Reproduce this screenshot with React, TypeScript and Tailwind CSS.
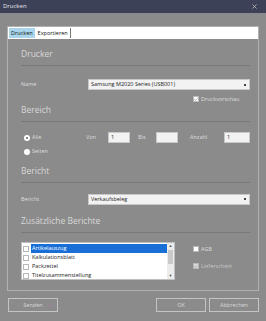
import { X, Check } from "lucide-react";

function SectionHeader({ title, className = "" }: { title: string; className?: string }) {
  return (
    <div className={`border-b border-[#787878] pb-[5px] ${className}`}>
      <h2 className="text-[8.5px] leading-[12px] text-[#d8d8d8]">{title}</h2>
    </div>
  );
}

function Box({ checked = false, faded = false }: { checked?: boolean; faded?: boolean }) {
  return (
    <span
      className={`flex h-[6px] w-[6px] items-center justify-center border border-[#b8b8b8] ${
        faded ? "bg-[#dcdcdc]" : "bg-white"
      }`}
    >
      {checked && <Check size={5} strokeWidth={4} className="text-[#8a8a8a]" />}
    </span>
  );
}

function Field({ value = "", className = "" }: { value?: string; className?: string }) {
  return (
    <div
      className={`flex h-[11px] items-center border border-[#c8c8c8] bg-[#f2f2f2] px-[2px] text-[5.5px] text-[#222] ${className}`}
    >
      {value}
    </div>
  );
}

function Select({ value }: { value: string }) {
  return (
    <div className="flex h-[11px] flex-1 items-center justify-between border border-[#c8c8c8] bg-[#f2f2f2] pl-[2px] pr-[3px] text-[5.5px] text-[#222]">
      <span>{value}</span>
      <span className="h-[2px] w-[2px] bg-[#444]" />
    </div>
  );
}

const reports = ["Artikelauszug", "Kalkulationsblatt", "Packzettel", "Titelzusammenstellung"];

export default function App() {
  return (
    <div
      className="flex h-[321px] w-[266px] flex-col bg-[#8b8b8b] text-[#dedede]"
      style={{ fontFamily: '"Open Sans", "Noto Sans", sans-serif' }}
    >
      {/* Title bar */}
      <div className="flex h-[13px] items-center justify-between bg-[#3d4157] pl-[3px] pr-[8px]">
        <span className="text-[6px] text-[#e8e8e8]">Drucken</span>
        <X size={7} strokeWidth={2.5} className="text-[#c8c8c8]" />
      </div>

      <div className="flex flex-1 flex-col px-[7px] pt-[13px]">
        {/* Main panel */}
        <div className="h-[265px] border border-[#b0b0b0]">
          {/* Tabs */}
          <div className="flex h-[12px] items-center bg-white pl-[1px] text-[5.5px] text-[#111]">
            <span className="flex h-[10px] items-center bg-[#a9d6ec] px-[2px]">Drucken</span>
            <span className="ml-[1px] flex h-[10px] items-center border-r border-[#777] px-[2px]">
              Exportieren
            </span>
          </div>

          <div className="pl-[13px] pr-[8px]">
            {/* Drucker */}
            <SectionHeader title="Drucker" className="mt-[9px]" />
            <div className="mt-[13px] flex h-[11px] items-center">
              <span className="w-[67px] text-[5.5px]">Name</span>
              <Select value="Samsung M2020 Series (USB001)" />
            </div>
            <div className="ml-[172px] mt-[5px] flex h-[8px] items-center gap-[2px]">
              <Box checked />
              <span className="text-[5.5px]">Druckvorschau</span>
            </div>

            {/* Bereich */}
            <SectionHeader title="Bereich" className="mt-[1px]" />
            <div className="mt-[10px] flex">
              <div className="flex w-[65px] flex-col gap-[3px] pl-[3px]">
                <label className="flex h-[11px] items-center gap-[2px] text-[5.5px]">
                  <span className="flex h-[6px] w-[6px] items-center justify-center rounded-full bg-white">
                    <span className="h-[2px] w-[2px] rounded-full bg-[#666]" />
                  </span>
                  Alle
                </label>
                <label className="flex h-[11px] items-center gap-[2px] text-[5.5px]">
                  <span className="h-[6px] w-[6px] rounded-full bg-white" />
                  Seiten
                </label>
              </div>
              <div className="flex h-[11px] flex-1 items-center text-[5.5px]">
                <span className="w-[22px]">Von</span>
                <Field value="1" className="w-[22px]" />
                <span className="ml-[8px] w-[18px]">Bis</span>
                <Field className="w-[22px]" />
                <span className="ml-[12px] w-[34px]">Anzahl</span>
                <Field value="1" className="flex-1" />
              </div>
            </div>

            {/* Bericht */}
            <SectionHeader title="Bericht" className="mt-[8px]" />
            <div className="mt-[10px] flex h-[12px] items-center">
              <span className="w-[67px] text-[5.5px]">Bericht</span>
              <Select value="Verkaufsbeleg" />
            </div>

            {/* Zusätzliche Berichte */}
            <SectionHeader title="Zusätzliche Berichte" className="mt-[10px]" />
            <div className="mt-[9px] flex">
              <div className="flex h-[38px] w-[154px] border border-[#c0c0c0] bg-white">
                <ul className="flex flex-1 flex-col pt-[1px] text-[5.5px] text-[#222]">
                  {reports.map((r, i) => (
                    <li key={r} className="flex h-[9px] items-center gap-[2px] pl-[1px]">
                      <Box />
                      <span
                        className={`flex h-[9px] flex-1 items-center pl-[1px] ${
                          i === 0 ? "bg-[#1a6fd6] text-white" : ""
                        }`}
                      >
                        {r}
                      </span>
                    </li>
                  ))}
                </ul>
                <div className="flex w-[7px] flex-col items-center justify-between bg-[#ececec] text-[4px] leading-[6px] text-[#555]">
                  <span>▲</span>
                  <span className="h-[14px] w-[5px] bg-[#c9c9c9]" />
                  <span className="mb-[8px]" />
                  <span>▼</span>
                </div>
              </div>
              <div className="ml-[18px] flex flex-col gap-[9px] pt-[3px]">
                <div className="flex h-[8px] items-center gap-[2px]">
                  <Box />
                  <span className="text-[5.5px]">AGB</span>
                </div>
                <div className="flex h-[8px] items-center gap-[2px]">
                  <Box checked faded />
                  <span className="text-[5.5px] text-[#c8c8c8]">Lieferschein</span>
                </div>
              </div>
            </div>
          </div>
        </div>

        {/* Buttons */}
        <div className="mt-[7px] flex pl-[1px] text-[5.5px] text-[#d8d8d8]">
          <button className="relative flex h-[14px] w-[50px] items-center justify-center border border-[#c4c4c4]">
            Senden
            <span className="absolute right-[6px] top-[6px] h-[1px] w-[1px] bg-[#e050d0]" />
          </button>
          <button className="ml-auto flex h-[14px] w-[50px] items-center justify-center border border-[#c4c4c4]">
            OK
          </button>
          <button className="ml-[3px] flex h-[14px] w-[50px] items-center justify-center border border-[#c4c4c4]">
            Abbrechen
          </button>
        </div>
      </div>
    </div>
  );
}
